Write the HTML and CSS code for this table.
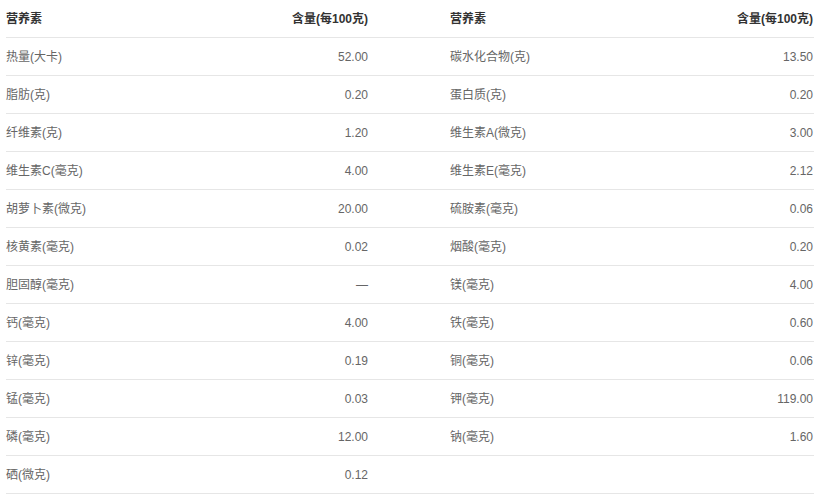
FILE: index.html
```html
<!DOCTYPE html>
<html lang="zh">
<head>
<meta charset="utf-8">
<link rel="stylesheet" href="styles.css">
</head>
<body>
<table class="nutri">
  <colgroup>
    <col class="c-name1"><col class="c-val1"><col class="c-name2"><col class="c-val2">
  </colgroup>
  <thead>
    <tr><th class="name">营养素</th><th class="val">含量(每100克)</th><th class="name name2">营养素</th><th class="val val2">含量(每100克)</th></tr>
  </thead>
  <tbody>
    <tr><td class="name">热量(大卡)</td><td class="val">52.00</td><td class="name name2">碳水化合物(克)</td><td class="val val2">13.50</td></tr>
    <tr><td class="name">脂肪(克)</td><td class="val">0.20</td><td class="name name2">蛋白质(克)</td><td class="val val2">0.20</td></tr>
    <tr><td class="name">纤维素(克)</td><td class="val">1.20</td><td class="name name2">维生素A(微克)</td><td class="val val2">3.00</td></tr>
    <tr><td class="name">维生素C(毫克)</td><td class="val">4.00</td><td class="name name2">维生素E(毫克)</td><td class="val val2">2.12</td></tr>
    <tr><td class="name">胡萝卜素(微克)</td><td class="val">20.00</td><td class="name name2">硫胺素(毫克)</td><td class="val val2">0.06</td></tr>
    <tr><td class="name">核黄素(毫克)</td><td class="val">0.02</td><td class="name name2">烟酸(毫克)</td><td class="val val2">0.20</td></tr>
    <tr><td class="name">胆固醇(毫克)</td><td class="val">—</td><td class="name name2">镁(毫克)</td><td class="val val2">4.00</td></tr>
    <tr><td class="name">钙(毫克)</td><td class="val">4.00</td><td class="name name2">铁(毫克)</td><td class="val val2">0.60</td></tr>
    <tr><td class="name">锌(毫克)</td><td class="val">0.19</td><td class="name name2">铜(毫克)</td><td class="val val2">0.06</td></tr>
    <tr><td class="name">锰(毫克)</td><td class="val">0.03</td><td class="name name2">钾(毫克)</td><td class="val val2">119.00</td></tr>
    <tr><td class="name">磷(毫克)</td><td class="val">12.00</td><td class="name name2">钠(毫克)</td><td class="val val2">1.60</td></tr>
    <tr><td class="name">硒(微克)</td><td class="val">0.12</td><td class="name name2"></td><td class="val val2"></td></tr>
  </tbody>
</table>
</body>
</html>
```

FILE: styles.css
```css
html, body {
  margin: 0;
  padding: 0;
  background: #fff;
}
body {
  font-family: "Liberation Sans", "Noto Sans CJK SC", Arial, sans-serif;
  font-size: 12px;
  color: #666;
}
.nutri {
  margin-left: 6px;
  width: 808px;
  border-collapse: collapse;
  table-layout: fixed;
}
.c-name1 { width: 180px; }
.c-val1 { width: 182px; }
.c-name2 { width: 262px; }
.c-val2 { width: 184px; }
.nutri th,
.nutri td {
  height: 37px;
  padding: 0;
  border-bottom: 1px solid #e6e6e6;
  vertical-align: middle;
  line-height: 16px;
  white-space: nowrap;
}
.nutri th {
  font-weight: bold;
  color: #333;
}
.nutri .name { text-align: left; }
.nutri .val { text-align: right; }
.nutri .name2 { padding-left: 82px; }
.nutri .val2 { padding-right: 1px; }
```
